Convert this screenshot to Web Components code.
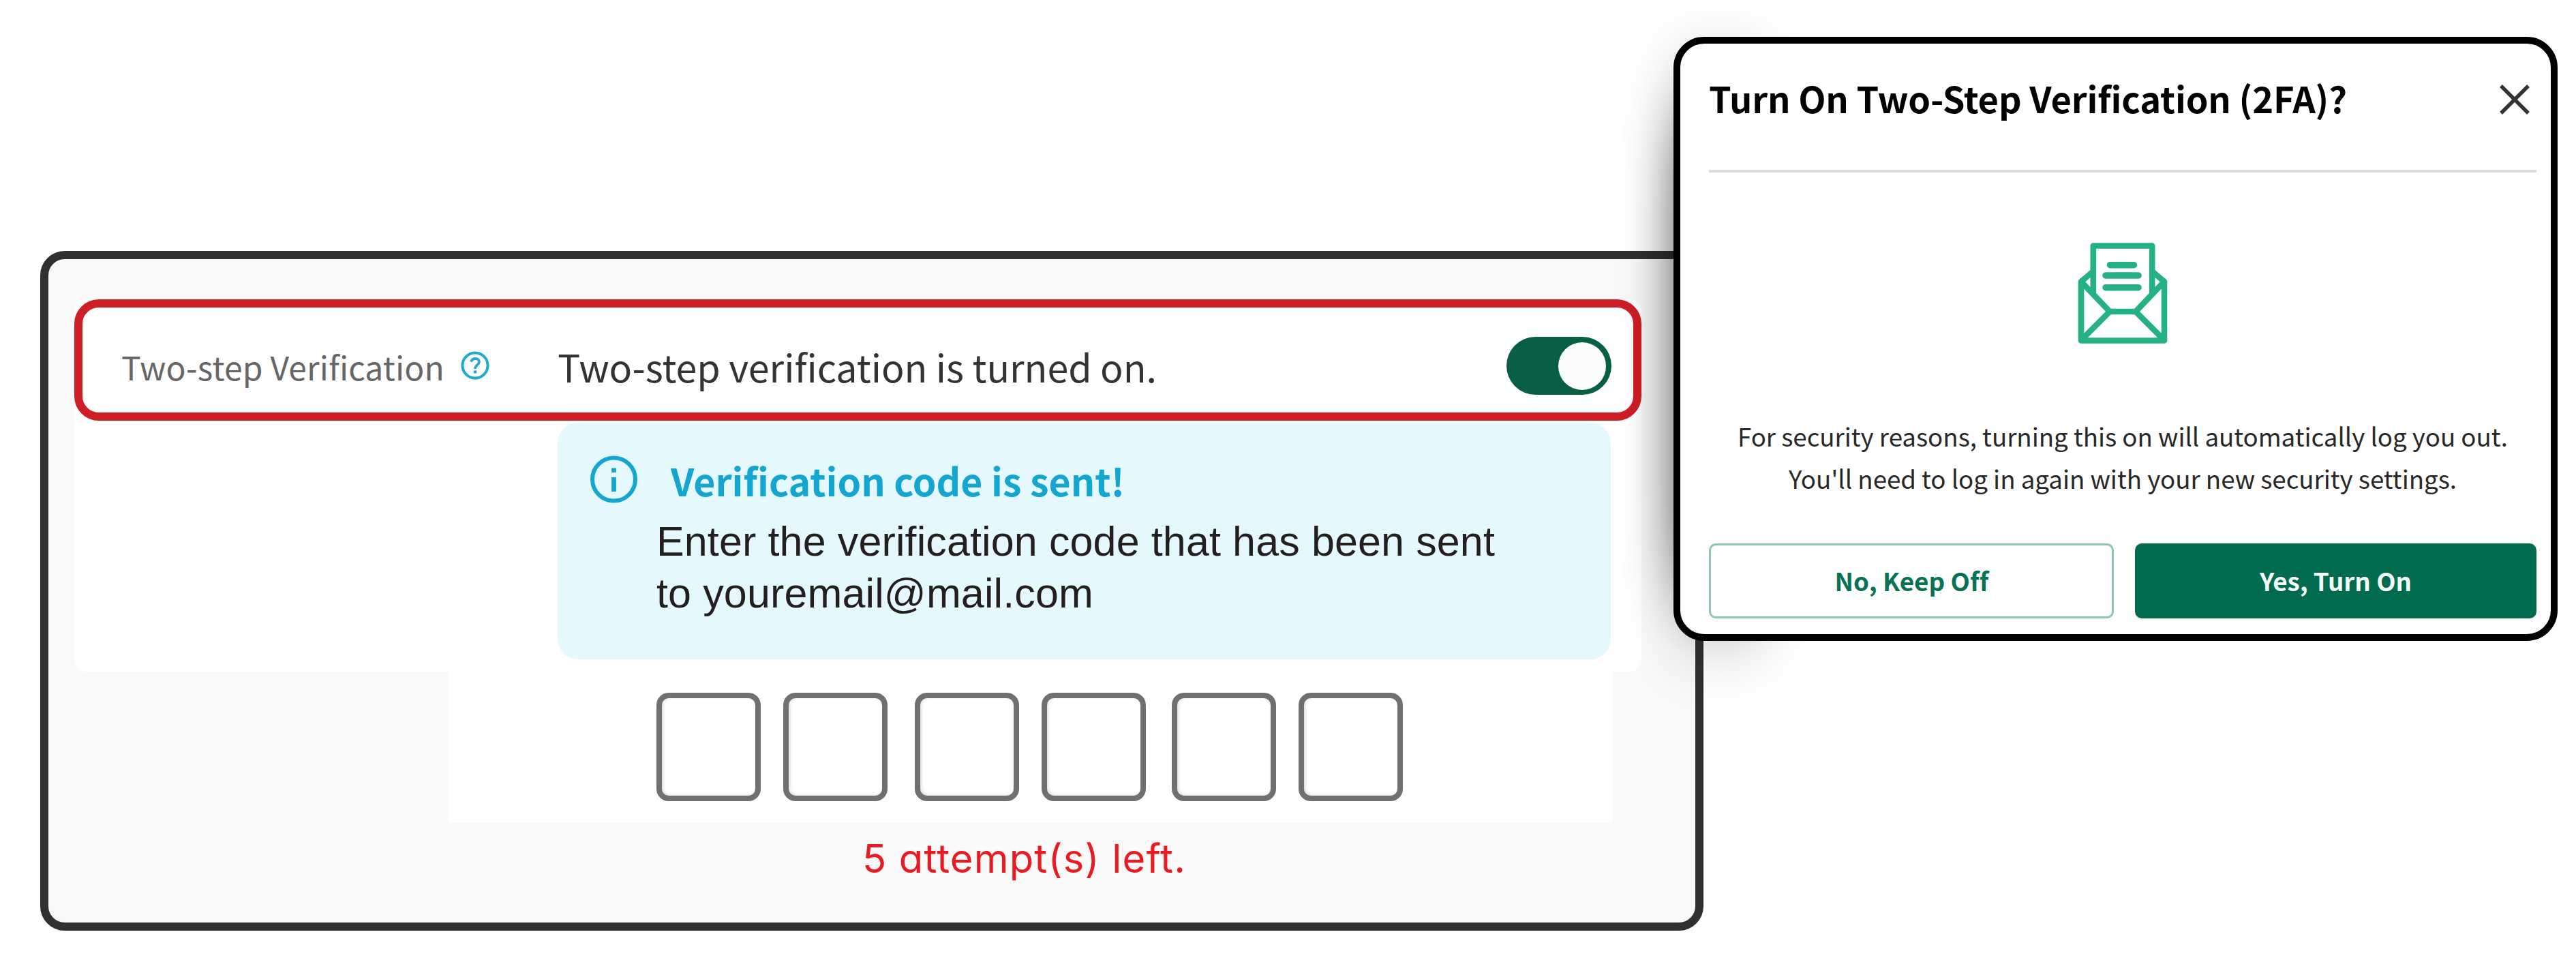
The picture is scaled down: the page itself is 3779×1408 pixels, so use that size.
<!DOCTYPE html>
<html lang="en"><head><meta charset="utf-8"><title>Two-step verification</title>
<style>html,body{margin:0;background:#fff}</style></head>
<body>
<two-step-page></two-step-page>
<script>
const define = (name, html, setup) => customElements.define(name, class extends HTMLElement {
  constructor() { super(); this.attachShadow({mode: 'open'}).innerHTML = html; }
  connectedCallback() { if (setup) setup(this, this.shadowRoot); }
});

/* One line of text, tracked so that it fills the width given in its attribute. */
define('fit-text', `<style>:host{display:block;white-space:nowrap}span{display:inline-block}</style><span><slot></slot></span>`, (el, root) => {
  const s = root.querySelector('span');
  const want = +el.getAttribute('width'), text = el.textContent;
  el.style.width = want + 'px';
  s.style.letterSpacing = (want - s.getBoundingClientRect().width) / text.length + 'px';
});

define('help-icon', `<style>:host{display:block;width:44px;height:44px}svg{display:block}</style>
<svg width="44" height="44" viewBox="0 0 44 44" fill="none" stroke="#22a9cf"><circle cx="22" cy="22" r="18.6" stroke-width="4"/><path d="M16 16.5c1-3 3.500-4.500 6.500-4.500c3.500 0 5.500 2 5.500 4.600c0 4.600-6 4.600-6 10.400" stroke-width="3.8"/><path d="M22 29.500v4" stroke-width="4.400"/></svg>`);

define('info-icon', `<style>:host{display:block;width:72px;height:72px}svg{display:block}</style>
<svg width="72" height="72" viewBox="0 0 72 72" fill="none" stroke="#14a6d0"><circle cx="36.500" cy="36" r="31.500" stroke-width="6"/><path d="M36.500 19.500v6.500M36.500 33v21" stroke-width="6.800"/></svg>`);

define('toggle-switch', `<style>:host{display:flex;justify-content:flex-end;align-items:center;box-sizing:border-box;width:154px;height:85px;padding-right:8px;border-radius:43px;background:#085f45}i{width:70px;height:70px;border-radius:50%;background:#fafcfb}</style><i></i>`);

define('setting-row', `<style>
:host{display:flex;align-items:flex-start;box-sizing:border-box;height:178px;border:12px solid #cf1e25;border-radius:36px;font:48px/60px "Noto Sans CJK SC",sans-serif;color:#666}
.label{margin:56px 0 0 57px}help-icon{margin:63px 0 0 23px}
.state{margin:51px 0 0 99px;font-size:55.6px;line-height:70px;color:#333}toggle-switch{margin:43px 32px 0 auto}
</style><fit-text class="label" width="474">Two-step Verification</fit-text><help-icon></help-icon><fit-text class="state" width="879">Two-step verification is turned on.</fit-text><toggle-switch></toggle-switch>`);

define('code-notice', `<style>
:host{display:block;box-sizing:border-box;width:1545px;height:347px;border-radius:30px;background:#e4f8fe;padding:47px 0 0 46px;color:#231f20;font:61px/76px "Liberation Sans",Arial,sans-serif}
header{display:flex;align-items:flex-start;height:72px}.title{margin:2px 0 0 48px;font:bold 55.5px/70px "Noto Sans CJK SC",sans-serif;color:#14a6d0}
.body{margin:17px 0 0 99px}.body+.body{margin-top:0}
</style><header><info-icon></info-icon><fit-text class="title" width="666">Verification code is sent!</fit-text></header>
<fit-text class="body" width="1230">Enter the verification code that has been sent</fit-text><fit-text class="body" width="641">to youremail@mail.com</fit-text>`);

define('code-input', `<style>
:host{display:flex;align-items:flex-start;box-sizing:border-box;width:1709px;height:222px;padding:31px 0 0 306px;background:#fff}
i{box-sizing:border-box;width:153px;height:159px;border:8px solid #707070;border-radius:18px;margin-right:33px;box-shadow:inset 2px -1px 4px #0002}
i:nth-of-type(2){margin-right:40px}i:nth-of-type(4){margin-right:38px}
</style><i></i><i></i><i></i><i></i><i></i><i></i>`);

define('settings-panel', `<style>
:host{display:block;box-sizing:border-box;width:2440px;height:997px;border:12px solid #303030;border-radius:36px;background:#f9f9f9;padding:59px 0 0 38px}
.card{width:2299px;height:546px;background:#fff;border-radius:17px}
code-notice{margin:3px 0 0 709px}code-input{margin-left:548px}
.left{margin:17px 0 0 1156px;font:58px/70px Inter,sans-serif;font-feature-settings:"cv11";color:#e91a20}
</style><div class="card"><setting-row></setting-row><code-notice></code-notice></div><code-input></code-input><fit-text class="left" width="475">5 attempt(s) left.</fit-text>`);

define('envelope-icon', `<style>:host{display:block;width:132px;height:148px}svg{display:block}</style>
<svg width="132" height="148" viewBox="0 0 132 148" fill="none" stroke="#23b185" stroke-width="8.6" stroke-linejoin="round" stroke-linecap="round">
<path d="M22.8 73V4.5H109.2V73"/><path d="M22.8 42L5 57V143.5H127V57L109.2 42M5 57L47 101H85L127 57M6 142L47 101M126 142L85 101"/>
<path d="M47.5 32.7H82.500M41 48H89M41 65.7H89" stroke-width="9.6"/></svg>`);

define('close-icon', `<style>:host{display:block;width:48px;height:48px}svg{display:block}</style>
<svg width="48" height="48" viewBox="0 0 48 48" stroke="#333" stroke-width="5.4"><path d="M4 4L44 44M44 4L4 44"/></svg>`);

define('dialog-button', `<style>
:host{display:flex;justify-content:center;box-sizing:border-box;height:110px;border:3px solid #8cc6b3;border-radius:10px;padding-top:23px;font:bold 36.8px/56px "Noto Sans CJK SC",sans-serif;color:#077256}
:host([primary]){background:#006b4f;border-color:#006b4f;color:#f4faf8}
</style><slot></slot>`);

define('confirm-dialog', `<style>
:host{display:block;box-sizing:border-box;width:1297px;height:886px;border:10px solid #000;border-radius:45px;background:#fff;padding:0 21px 0 42px}
header{display:flex;align-items:flex-start;box-sizing:border-box;height:189px;border-bottom:4px solid #dcdcdc}
.title{margin:44px 0 0 0;font:bold 52.4px/70px "Noto Sans CJK SC",sans-serif;color:#000}
close-icon{margin:58px 8px 0 auto}
envelope-icon{margin:103px auto 0 541px}
.t{font:36.7px/62px "Noto Sans CJK SC",sans-serif;color:#282828}
.a{margin:104px 0 0 42px}.b{margin:0 0 0 117px}
footer{display:flex;margin-top:65px}
.no{width:594px;margin-right:31px}.yes{width:589px}
</style><header><fit-text class="title" width="936">Turn On Two-Step Verification (2FA)?</fit-text><close-icon></close-icon></header>
<envelope-icon></envelope-icon>
<fit-text class="t a" width="1130">For security reasons, turning this on will automatically log you out.</fit-text>
<fit-text class="t b" width="980">You'll need to log in again with your new security settings.</fit-text>
<footer><dialog-button class="no"><fit-text width="225">No, Keep Off</fit-text></dialog-button><dialog-button class="yes" primary><fit-text width="223">Yes, Turn On</fit-text></dialog-button></footer>`);

define('two-step-page', `<style>
:host{display:block;position:relative;box-sizing:border-box;width:3779px;height:1408px;padding:368px 0 0 59px;overflow:hidden;background:#fff}
svg{position:absolute;left:2200px;top:0}confirm-dialog{position:absolute;left:2455px;top:54px}
</style><settings-panel></settings-panel>
<svg width="700" height="1408"><filter id="s" filterUnits="userSpaceOnUse" x="0" y="-300" width="700" height="1800"><feGaussianBlur stdDeviation="38 75"/></filter><rect x="257" y="160" width="130" height="715" fill="#000" opacity=".68" filter="url(#s)"/></svg>
<confirm-dialog></confirm-dialog>`);
</script>
</body></html>
